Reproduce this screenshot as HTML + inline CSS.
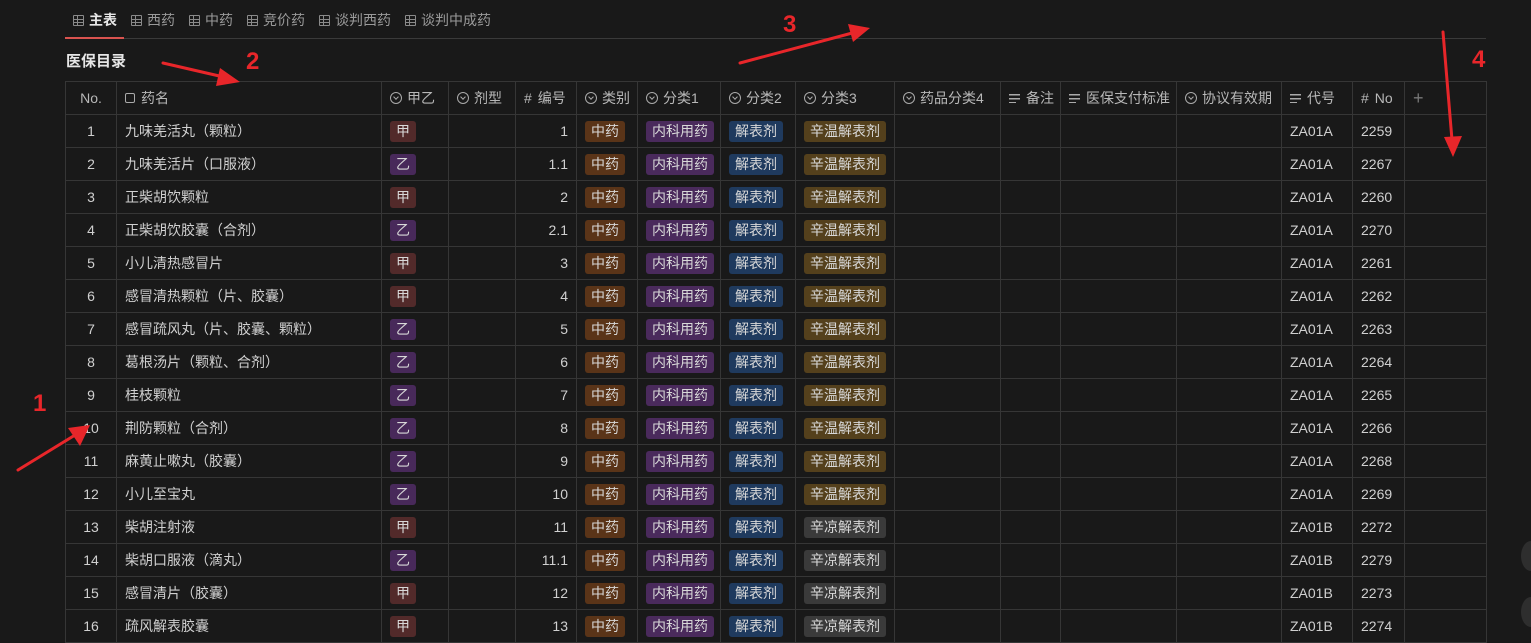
<!DOCTYPE html>
<html><head><meta charset="utf-8"><style>
*{margin:0;padding:0;box-sizing:border-box}
body{width:1531px;height:625px;overflow:hidden;background:#191919;font-family:"Liberation Sans","Noto Sans CJK SC",sans-serif;color:#d0d0d0;font-size:14px;position:relative}
.tabs{position:absolute;left:65px;top:0;width:1421px;height:39px;border-bottom:1px solid #3a3a3a}
.tab{position:absolute;top:10px;font-size:14px;color:#9a9a9a;white-space:nowrap}
.tab i{display:inline-block;width:11px;height:11px;border:1.3px solid #8a8a8a;border-radius:1px;margin-right:5px;vertical-align:-1px;background:linear-gradient(#8a8a8a,#8a8a8a) 0 3px/100% 1.2px no-repeat,linear-gradient(#8a8a8a,#8a8a8a) 0 6px/100% 1.2px no-repeat,linear-gradient(#8a8a8a,#8a8a8a) 3px 0/1.2px 100% no-repeat}
.tab.a{color:#e8e8e8;font-weight:bold}
.uline{position:absolute;left:65px;top:37px;width:59px;height:2px;background:#d9534f}
h1{position:absolute;left:66px;top:50px;font-size:15px;font-weight:bold;color:#e6e6e6}
table{position:absolute;left:65px;top:81px;border-collapse:collapse;table-layout:fixed;width:1421px}
td,th{border:1px solid #363636;height:33px;white-space:nowrap;overflow:hidden;padding:0 8px;font-weight:normal;text-align:left}
th{color:#b8b8b8;font-size:14px}
td.c{text-align:center;padding:0}
td.r{text-align:right}
.ic{display:inline-block;width:12px;height:12px;border:1.3px solid #aaa;border-radius:50%;margin-right:5px;vertical-align:-1px;position:relative}
.ic:after{content:"";position:absolute;left:2.5px;top:1.5px;width:3px;height:3px;border-right:1.2px solid #aaa;border-bottom:1.2px solid #aaa;transform:rotate(45deg)}
.ln{display:inline-block;width:11px;height:9px;margin-right:6px;background:linear-gradient(#aaa,#aaa) 0 0/11px 1.5px no-repeat,linear-gradient(#aaa,#aaa) 0 4px/11px 1.5px no-repeat,linear-gradient(#aaa,#aaa) 0 8px/7px 1.5px no-repeat}
.sq{display:inline-block;width:10px;height:10px;border:1.2px solid #aaa;border-radius:2px;margin-right:6px;vertical-align:0}
.t{display:inline-block;padding:0 6px;height:21px;line-height:21px;border-radius:3px;color:#d8d8d8}
.jia{background:#522a2a}.yi{background:#48295a}.zy{background:#5a3418}.nk{background:#4a2a5c}.jb{background:#1f3a5e}.xw{background:#54401c}.xl{background:#3a3a3a}
svg.ann{position:absolute;left:0;top:0}
.dot{position:absolute;left:1521px;width:20px;height:30px;border-radius:50%;background:#2e2e2e}
</style></head><body>
<div class="tabs">
<span class="tab a" style="left:8px"><i></i>主表</span>
<span class="tab" style="left:66px"><i></i>西药</span>
<span class="tab" style="left:124px"><i></i>中药</span>
<span class="tab" style="left:182px"><i></i>竞价药</span>
<span class="tab" style="left:254px"><i></i>谈判西药</span>
<span class="tab" style="left:340px"><i></i>谈判中成药</span>
</div>
<div class="uline"></div>
<h1>医保目录</h1>
<table>
<colgroup><col style="width:51px"><col style="width:265px"><col style="width:67px"><col style="width:67px"><col style="width:61px"><col style="width:61px"><col style="width:83px"><col style="width:75px"><col style="width:99px"><col style="width:106px"><col style="width:60px"><col style="width:116px"><col style="width:105px"><col style="width:71px"><col style="width:52px"><col style="width:82px"></colgroup>
<tr><th style="text-align:center;padding:0">No.</th><th><span class="sq"></span>药名</th><th><span class="ic"></span>甲乙</th><th><span class="ic"></span>剂型</th><th><span style="margin-right:6px">#</span>编号</th><th><span class="ic"></span>类别</th><th><span class="ic"></span>分类1</th><th><span class="ic"></span>分类2</th><th><span class="ic"></span>分类3</th><th><span class="ic"></span>药品分类4</th><th><span class="ln"></span>备注</th><th><span class="ln"></span>医保支付标准</th><th><span class="ic"></span>协议有效期</th><th><span class="ln"></span>代号</th><th><span style="margin-right:6px">#</span>No</th><th style="color:#777;font-size:18px">+</th></tr>
<tr><td class="c">1</td><td>九味羌活丸（颗粒）</td><td><span class="t jia">甲</span></td><td></td><td class="r">1</td><td><span class="t zy">中药</span></td><td><span class="t nk">内科用药</span></td><td><span class="t jb">解表剂</span></td><td><span class="t xw">辛温解表剂</span></td><td></td><td></td><td></td><td></td><td>ZA01A</td><td>2259</td><td></td></tr>
<tr><td class="c">2</td><td>九味羌活片（口服液）</td><td><span class="t yi">乙</span></td><td></td><td class="r">1.1</td><td><span class="t zy">中药</span></td><td><span class="t nk">内科用药</span></td><td><span class="t jb">解表剂</span></td><td><span class="t xw">辛温解表剂</span></td><td></td><td></td><td></td><td></td><td>ZA01A</td><td>2267</td><td></td></tr>
<tr><td class="c">3</td><td>正柴胡饮颗粒</td><td><span class="t jia">甲</span></td><td></td><td class="r">2</td><td><span class="t zy">中药</span></td><td><span class="t nk">内科用药</span></td><td><span class="t jb">解表剂</span></td><td><span class="t xw">辛温解表剂</span></td><td></td><td></td><td></td><td></td><td>ZA01A</td><td>2260</td><td></td></tr>
<tr><td class="c">4</td><td>正柴胡饮胶囊（合剂）</td><td><span class="t yi">乙</span></td><td></td><td class="r">2.1</td><td><span class="t zy">中药</span></td><td><span class="t nk">内科用药</span></td><td><span class="t jb">解表剂</span></td><td><span class="t xw">辛温解表剂</span></td><td></td><td></td><td></td><td></td><td>ZA01A</td><td>2270</td><td></td></tr>
<tr><td class="c">5</td><td>小儿清热感冒片</td><td><span class="t jia">甲</span></td><td></td><td class="r">3</td><td><span class="t zy">中药</span></td><td><span class="t nk">内科用药</span></td><td><span class="t jb">解表剂</span></td><td><span class="t xw">辛温解表剂</span></td><td></td><td></td><td></td><td></td><td>ZA01A</td><td>2261</td><td></td></tr>
<tr><td class="c">6</td><td>感冒清热颗粒（片、胶囊）</td><td><span class="t jia">甲</span></td><td></td><td class="r">4</td><td><span class="t zy">中药</span></td><td><span class="t nk">内科用药</span></td><td><span class="t jb">解表剂</span></td><td><span class="t xw">辛温解表剂</span></td><td></td><td></td><td></td><td></td><td>ZA01A</td><td>2262</td><td></td></tr>
<tr><td class="c">7</td><td>感冒疏风丸（片、胶囊、颗粒）</td><td><span class="t yi">乙</span></td><td></td><td class="r">5</td><td><span class="t zy">中药</span></td><td><span class="t nk">内科用药</span></td><td><span class="t jb">解表剂</span></td><td><span class="t xw">辛温解表剂</span></td><td></td><td></td><td></td><td></td><td>ZA01A</td><td>2263</td><td></td></tr>
<tr><td class="c">8</td><td>葛根汤片（颗粒、合剂）</td><td><span class="t yi">乙</span></td><td></td><td class="r">6</td><td><span class="t zy">中药</span></td><td><span class="t nk">内科用药</span></td><td><span class="t jb">解表剂</span></td><td><span class="t xw">辛温解表剂</span></td><td></td><td></td><td></td><td></td><td>ZA01A</td><td>2264</td><td></td></tr>
<tr><td class="c">9</td><td>桂枝颗粒</td><td><span class="t yi">乙</span></td><td></td><td class="r">7</td><td><span class="t zy">中药</span></td><td><span class="t nk">内科用药</span></td><td><span class="t jb">解表剂</span></td><td><span class="t xw">辛温解表剂</span></td><td></td><td></td><td></td><td></td><td>ZA01A</td><td>2265</td><td></td></tr>
<tr><td class="c">10</td><td>荆防颗粒（合剂）</td><td><span class="t yi">乙</span></td><td></td><td class="r">8</td><td><span class="t zy">中药</span></td><td><span class="t nk">内科用药</span></td><td><span class="t jb">解表剂</span></td><td><span class="t xw">辛温解表剂</span></td><td></td><td></td><td></td><td></td><td>ZA01A</td><td>2266</td><td></td></tr>
<tr><td class="c">11</td><td>麻黄止嗽丸（胶囊）</td><td><span class="t yi">乙</span></td><td></td><td class="r">9</td><td><span class="t zy">中药</span></td><td><span class="t nk">内科用药</span></td><td><span class="t jb">解表剂</span></td><td><span class="t xw">辛温解表剂</span></td><td></td><td></td><td></td><td></td><td>ZA01A</td><td>2268</td><td></td></tr>
<tr><td class="c">12</td><td>小儿至宝丸</td><td><span class="t yi">乙</span></td><td></td><td class="r">10</td><td><span class="t zy">中药</span></td><td><span class="t nk">内科用药</span></td><td><span class="t jb">解表剂</span></td><td><span class="t xw">辛温解表剂</span></td><td></td><td></td><td></td><td></td><td>ZA01A</td><td>2269</td><td></td></tr>
<tr><td class="c">13</td><td>柴胡注射液</td><td><span class="t jia">甲</span></td><td></td><td class="r">11</td><td><span class="t zy">中药</span></td><td><span class="t nk">内科用药</span></td><td><span class="t jb">解表剂</span></td><td><span class="t xl">辛凉解表剂</span></td><td></td><td></td><td></td><td></td><td>ZA01B</td><td>2272</td><td></td></tr>
<tr><td class="c">14</td><td>柴胡口服液（滴丸）</td><td><span class="t yi">乙</span></td><td></td><td class="r">11.1</td><td><span class="t zy">中药</span></td><td><span class="t nk">内科用药</span></td><td><span class="t jb">解表剂</span></td><td><span class="t xl">辛凉解表剂</span></td><td></td><td></td><td></td><td></td><td>ZA01B</td><td>2279</td><td></td></tr>
<tr><td class="c">15</td><td>感冒清片（胶囊）</td><td><span class="t jia">甲</span></td><td></td><td class="r">12</td><td><span class="t zy">中药</span></td><td><span class="t nk">内科用药</span></td><td><span class="t jb">解表剂</span></td><td><span class="t xl">辛凉解表剂</span></td><td></td><td></td><td></td><td></td><td>ZA01B</td><td>2273</td><td></td></tr>
<tr><td class="c">16</td><td>疏风解表胶囊</td><td><span class="t jia">甲</span></td><td></td><td class="r">13</td><td><span class="t zy">中药</span></td><td><span class="t nk">内科用药</span></td><td><span class="t jb">解表剂</span></td><td><span class="t xl">辛凉解表剂</span></td><td></td><td></td><td></td><td></td><td>ZA01B</td><td>2274</td><td></td></tr>
</table>
<div class="dot" style="top:541px"></div><div class="dot" style="top:597px"></div>
<svg class="ann" width="1531" height="625" font-family="Liberation Sans, sans-serif" font-weight="bold" font-size="24" fill="#e8262a">
<g stroke="#e8262a" stroke-width="3" stroke-linecap="round">
<line x1="18" y1="470" x2="80" y2="432"/>
<line x1="163" y1="63" x2="228" y2="78"/>
<line x1="740" y1="63" x2="856" y2="32"/>
<line x1="1443" y1="32" x2="1452" y2="140"/>
</g>
<polygon points="90,425 68,428 80,446"/>
<polygon points="240,82 220,68 216,86"/>
<polygon points="870,28 848,24 853,42"/>
<polygon points="1453,157 1444,137 1462,136"/>
<text x="33" y="411">1</text>
<text x="246" y="69">2</text>
<text x="783" y="32">3</text>
<text x="1472" y="67">4</text>
</svg>
</body></html>
